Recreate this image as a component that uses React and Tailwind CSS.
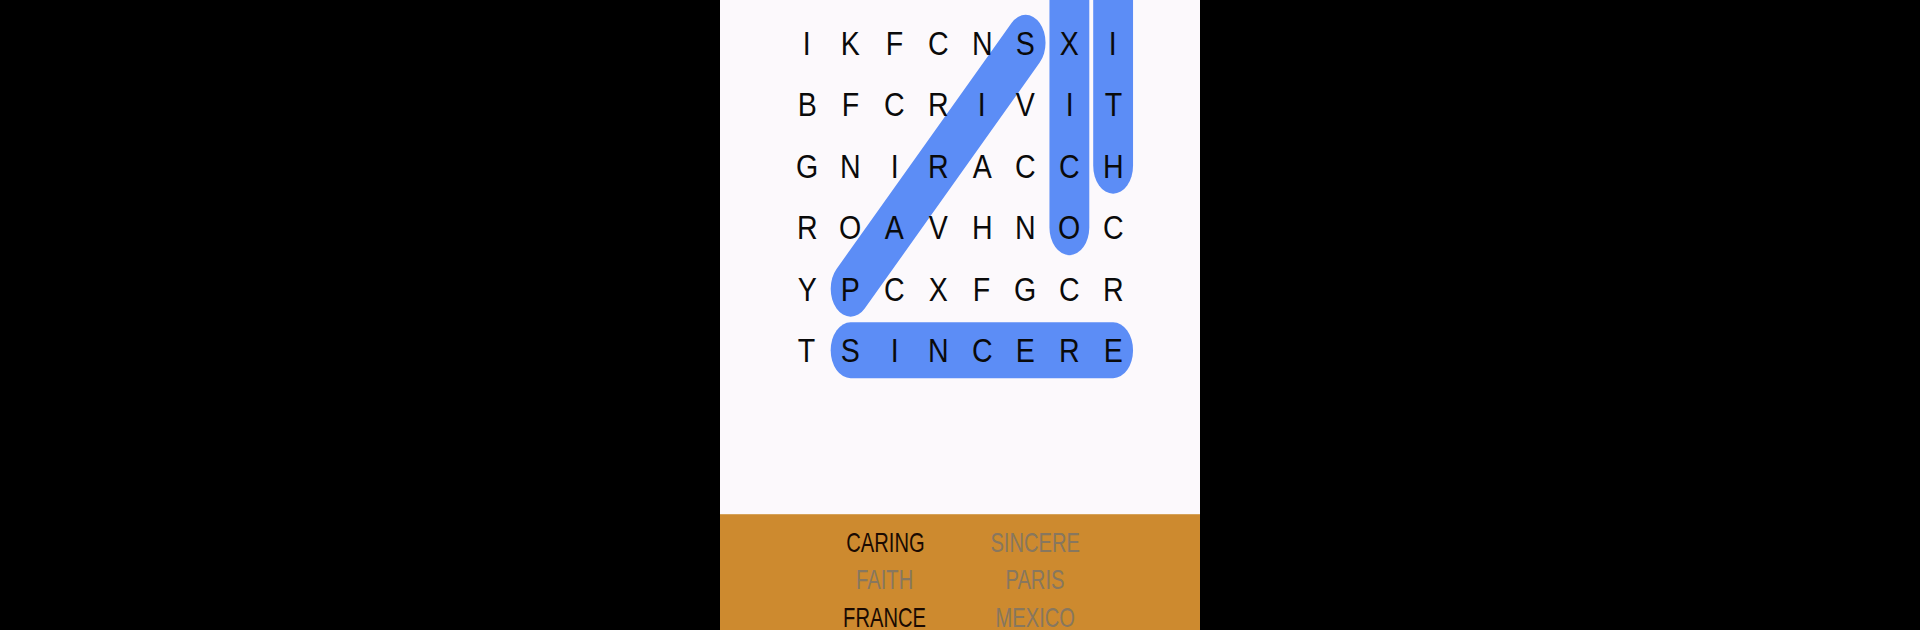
import React from 'react';

const ROWS = [
    'IKFCNSXI',
    'BFCRIVIT',
    'GNIRACCH',
    'ROAVHNOC',
    'YPCXFGCR',
    'TSINCERE',
];

const WORDS = [
    { text: 'CARING', found: false },
    { text: 'SINCERE', found: true },
    { text: 'FAITH', found: true },
    { text: 'PARIS', found: true },
    { text: 'FRANCE', found: false },
    { text: 'MEXICO', found: true },
];

// cell units in svg space (square cells, squashed horizontally by the svg box)
const U = 61.5;
const c = (i) => (i + 0.5) * U;

// found words as [col1, row1, col2, row2]
const MARKS = [
    [5, 0, 1, 4],
    [1, 5, 7, 5],
    [6, -3, 6, 3],
    [7, -3, 7, 2],
];

const Highlights = () => (
    <svg
        className="absolute left-0 top-0 overflow-visible"
        width="350"
        height="369"
        viewBox={`0 0 ${8 * U} ${6 * U}`}
        preserveAspectRatio="none"
    >
        {MARKS.map(([x1, y1, x2, y2], i) => (
            <line
                key={i}
                x1={c(x1)}
                y1={c(y1)}
                x2={c(x2)}
                y2={c(y2)}
                stroke="#5c8df6"
                strokeWidth="56"
                strokeLinecap="round"
            />
        ))}
    </svg>
);

const App = () => {
    return (
        <div className="w-[1920px] h-[630px] bg-black flex justify-center overflow-hidden" style={{ fontFamily: '"Liberation Sans", Arial, sans-serif' }}>
            <div className="w-[480px] h-[630px] flex flex-col overflow-hidden">
                {/* board */}
                <div className="h-[514px] bg-[#fcf9fc] pt-[12px] shrink-0">
                    <div className="relative w-[350px] mx-auto">
                        <Highlights />
                        <div className="relative grid grid-cols-8">
                            {ROWS.map((row, r) =>
                                row.split('').map((ch, i) => (
                                    <div key={`${r}-${i}`} className="h-[61.5px] flex items-center justify-center">
                                        <span className="inline-block text-[34px] leading-none text-[#0a0a0a] scale-x-[0.84]">{ch}</span>
                                    </div>
                                ))
                            )}
                        </div>
                    </div>
                </div>

                {/* word list */}
                <div className="flex-1 bg-[#cd8a2f] border-t border-[#d6a35a] pt-[9px]">
                    <div className="grid grid-cols-2 w-[300px] mx-auto">
                        {WORDS.map((w) => (
                            <div key={w.text} className="h-[37.5px] flex items-center justify-center">
                                <span className={`inline-block text-[28px] leading-none scale-x-[0.72] ${w.found ? 'text-[#87775f]' : 'text-[#1a0a02]'}`}>
                                    {w.text}
                                </span>
                            </div>
                        ))}
                    </div>
                </div>
            </div>
        </div>
    );
};

export default App;
